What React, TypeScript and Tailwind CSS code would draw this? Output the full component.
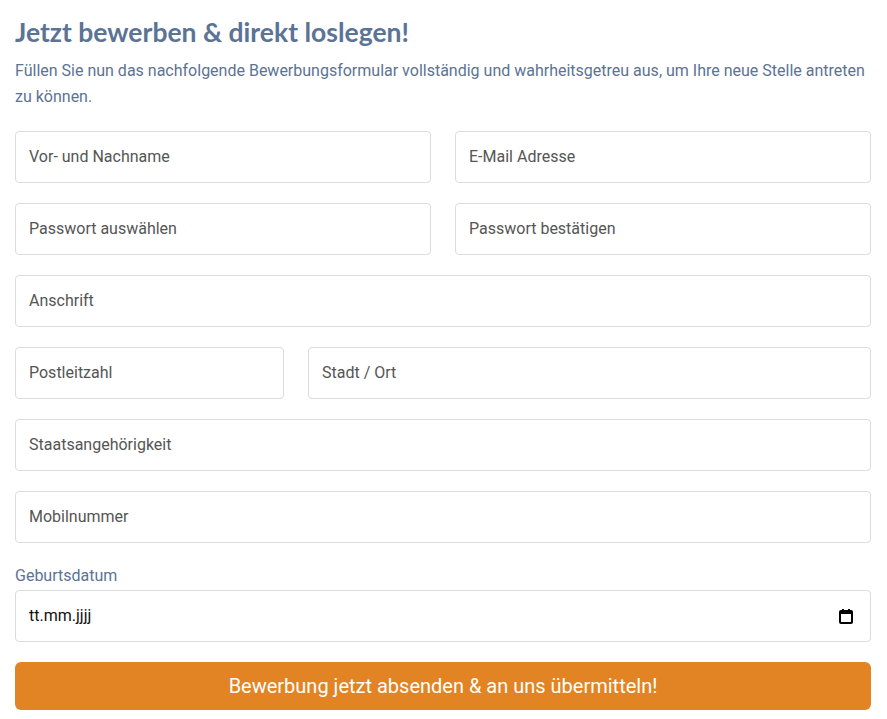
import React from "react";

const inputCls =
  "w-full h-[52px] rounded-[4px] border border-[#dcdcdc] bg-white px-[13px] text-[16px] text-[#555555] outline-none";

function Field({ placeholder }: { placeholder: string }) {
  return (
    <div className={inputCls + " flex items-center"}>
      <span>{placeholder}</span>
    </div>
  );
}

export default function App() {
  return (
    <div className="bg-white w-[887px] h-[719px] pl-[15px] pr-[16px] pt-[14px] overflow-hidden" style={{ fontFamily: "Roboto, 'Liberation Sans', sans-serif" }}>
      <h1 className="text-[26.5px] font-bold text-[#5b7394] leading-[36px]" style={{ fontFamily: "Lato, 'Open Sans', sans-serif" }}>
        Jetzt bewerben &amp; direkt loslegen!
      </h1>
      <p className="mt-[8px] text-[16px] leading-[26px] text-[#5b7394]">
        Füllen Sie nun das nachfolgende Bewerbungsformular vollständig und wahrheitsgetreu aus, um Ihre neue Stelle antreten zu können.
      </p>
      <div className="mt-[21px] flex flex-col gap-[20px]">
        <div className="grid grid-cols-2 gap-x-[24px]">
          <Field placeholder="Vor- und Nachname" />
          <Field placeholder="E-Mail Adresse" />
        </div>
        <div className="grid grid-cols-2 gap-x-[24px]">
          <Field placeholder="Passwort auswählen" />
          <Field placeholder="Passwort bestätigen" />
        </div>
        <Field placeholder="Anschrift" />
        <div className="grid grid-cols-[269px_1fr] gap-x-[24px]">
          <Field placeholder="Postleitzahl" />
          <Field placeholder="Stadt / Ort" />
        </div>
        <Field placeholder="Staatsangehörigkeit" />
        <Field placeholder="Mobilnummer" />
      </div>
      <div className="mt-[23px] text-[16px] leading-[20px] text-[#5b7394]">Geburtsdatum</div>
      <div className={inputCls + " mt-[4px] flex items-center justify-between text-black"}>
        <span className="text-[#111111]">tt.mm.jjjj</span>
        <svg width="14" height="16" viewBox="0 0 14 16" className="mr-[4px]">
          <rect x="1" y="3" width="12" height="12" rx="1" fill="none" stroke="#000" strokeWidth="2" />
          <rect x="1" y="3" width="12" height="3" fill="#000" />
          <rect x="3" y="1" width="2" height="3" fill="#000" />
          <rect x="9" y="1" width="2" height="3" fill="#000" />
        </svg>
      </div>
      <button className="mt-[20px] w-full h-[48px] rounded-[6px] bg-[#e28324] text-white text-[20px] flex items-center justify-center">
        Bewerbung jetzt absenden &amp; an uns übermitteln!
      </button>
    </div>
  );
}
